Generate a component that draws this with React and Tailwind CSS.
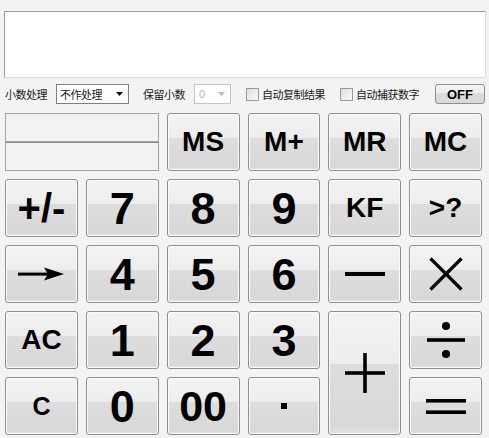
import React from "react";

const FONT = { fontFamily: '"Liberation Sans", Arial, sans-serif' };
const CJK = { fontFamily: '"Noto Sans CJK SC", "Noto Sans", sans-serif' };

function Btn({ children, className = "", label }) {
  return (
    <button
      aria-label={label}
      title={label}
      className={
        "flex items-center justify-center rounded-[3px] border border-[#8f8f8f] bg-[linear-gradient(to_bottom,#f3f3f3_0%,#ededed_43%,#dddddd_43%,#d8d8d8_94%,#e4e4e4_100%)] shadow-[inset_0_0_0_1px_#fbfbfb] font-bold text-black leading-none " +
        className
      }
      style={FONT}
    >
      {children}
    </button>
  );
}

export default function App() {
  return (
    <div className="w-[489px] h-[438px] overflow-hidden bg-[#f3f3f3] pt-[11px]" style={CJK}>
      {/* display */}
      <div className="ml-[4px] mr-[3px] h-[67px] bg-white border border-t-[#9c9c9c] border-l-[#9c9c9c] border-r-[#dcdcdc] border-b-[#dcdcdc]" />

      {/* options row */}
      <div className="mt-[6px] h-[20px] flex items-center text-[11px] text-[#1a1a1a]">
        <span className="ml-[5px] w-[43px] tracking-[-0.5px]">小数处理</span>
        <div className="ml-[8px] w-[73px] h-[20px] bg-white border border-[#7f7f7f] flex items-center pl-[3px] pr-[5px] justify-between">
          <span className="tracking-[-0.5px]">不作处理</span>
          <svg width="7" height="4" viewBox="0 0 7 4"><polygon points="0,0 7,0 3.5,4" fill="#111" /></svg>
        </div>
        <span className="ml-[14px] w-[43px] tracking-[-0.5px]">保留小数</span>
        <div className="ml-[8px] w-[37px] h-[20px] bg-white border border-[#c4c4c4] flex items-center pl-[4px] pr-[5px] justify-between text-[#b5b5b5]">
          <span style={FONT}>0</span>
          <svg width="7" height="4" viewBox="0 0 7 4"><polygon points="0,0 7,0 3.5,4" fill="#bbb" /></svg>
        </div>
        <span className="ml-[15px] w-[13px] h-[13px] border border-[#9a9a9a] bg-[linear-gradient(135deg,#dedede,#f8f8f8)]" />
        <span className="ml-[3px] tracking-[-0.5px]">自动复制结果</span>
        <span className="ml-[15px] w-[13px] h-[13px] border border-[#9a9a9a] bg-[linear-gradient(135deg,#dedede,#f8f8f8)]" />
        <span className="ml-[3px] tracking-[-0.5px]">自动捕获数字</span>
        <button
          className="ml-[16px] w-[50px] h-[20px] rounded-[3px] border border-[#8f8f8f] bg-[linear-gradient(to_bottom,#f4f4f4_0%,#ececec_45%,#dcdcdc_45%,#d9d9d9_100%)] text-[13px] font-bold text-black leading-none flex items-center justify-center"
          style={FONT}
        >
          OFF
        </button>
      </div>

      {/* keypad */}
      <div className="mt-[9px] ml-[5px] w-[477px] grid grid-cols-6 grid-rows-[58px_58px_58px_58px_58px] gap-x-[8px] gap-y-[8px]">
        {/* memory display */}
        <div className="col-span-2 flex flex-col">
          <div className="h-[29px] border border-[#a3a3a3] bg-[#f2f2f2]" />
          <div className="h-[29px] border border-t-[#8a8a8a] border-[#a3a3a3] bg-[#f2f2f2]" />
        </div>
        <Btn className="text-[28px]">MS</Btn>
        <Btn className="text-[28px]">M+</Btn>
        <Btn className="text-[28px]">MR</Btn>
        <Btn className="text-[28px]">MC</Btn>

        <Btn className="text-[40px]">+/-</Btn>
        <Btn className="text-[45px]">7</Btn>
        <Btn className="text-[45px]">8</Btn>
        <Btn className="text-[45px]">9</Btn>
        <Btn className="text-[28px]">KF</Btn>
        <Btn className="text-[28px]">&gt;?</Btn>

        <Btn label="→">
          <svg width="46" height="16" viewBox="0 0 46 16">
            <rect x="0" y="6.6" width="34" height="3" fill="#000" />
            <polygon points="26,1.5 46,8 26,14.5 30,8" fill="#000" />
          </svg>
        </Btn>
        <Btn className="text-[45px]">4</Btn>
        <Btn className="text-[45px]">5</Btn>
        <Btn className="text-[45px]">6</Btn>
        <Btn label="—">
          <svg width="40" height="4" viewBox="0 0 40 4">
            <rect x="0" y="0" width="40" height="4" fill="#000" />
          </svg>
        </Btn>
        <Btn label="×">
          <svg width="34" height="34" viewBox="0 0 34 34">
            <line x1="1.5" y1="1.5" x2="32.5" y2="32.5" stroke="#000" strokeWidth="3.2" />
            <line x1="32.5" y1="1.5" x2="1.5" y2="32.5" stroke="#000" strokeWidth="3.2" />
          </svg>
        </Btn>

        <Btn className="text-[28px]">AC</Btn>
        <Btn className="text-[45px]">1</Btn>
        <Btn className="text-[45px]">2</Btn>
        <Btn className="text-[45px]">3</Btn>
        <Btn className="row-span-2" label="+">
          <svg width="40" height="40" viewBox="0 0 40 40">
            <rect x="0" y="18.2" width="40" height="3.6" fill="#000" />
            <rect x="18.2" y="0" width="3.6" height="40" fill="#000" />
          </svg>
        </Btn>
        <Btn label="÷">
          <svg width="38" height="36" viewBox="0 0 38 36">
            <rect x="0" y="16.2" width="38" height="3.6" fill="#000" />
            <circle cx="19" cy="4" r="4" fill="#000" />
            <circle cx="19" cy="32" r="4" fill="#000" />
          </svg>
        </Btn>

        <Btn className="text-[25px]">C</Btn>
        <Btn className="text-[45px]">0</Btn>
        <Btn className="text-[43px]">00</Btn>
        <Btn label="·">
          <span className="block w-[6px] h-[6px] bg-black" />
        </Btn>
        <Btn label="=">
          <svg width="40" height="15" viewBox="0 0 40 15">
            <rect x="0" y="0" width="40" height="3.6" fill="#000" />
            <rect x="0" y="11.4" width="40" height="3.6" fill="#000" />
          </svg>
        </Btn>
      </div>
    </div>
  );
}
